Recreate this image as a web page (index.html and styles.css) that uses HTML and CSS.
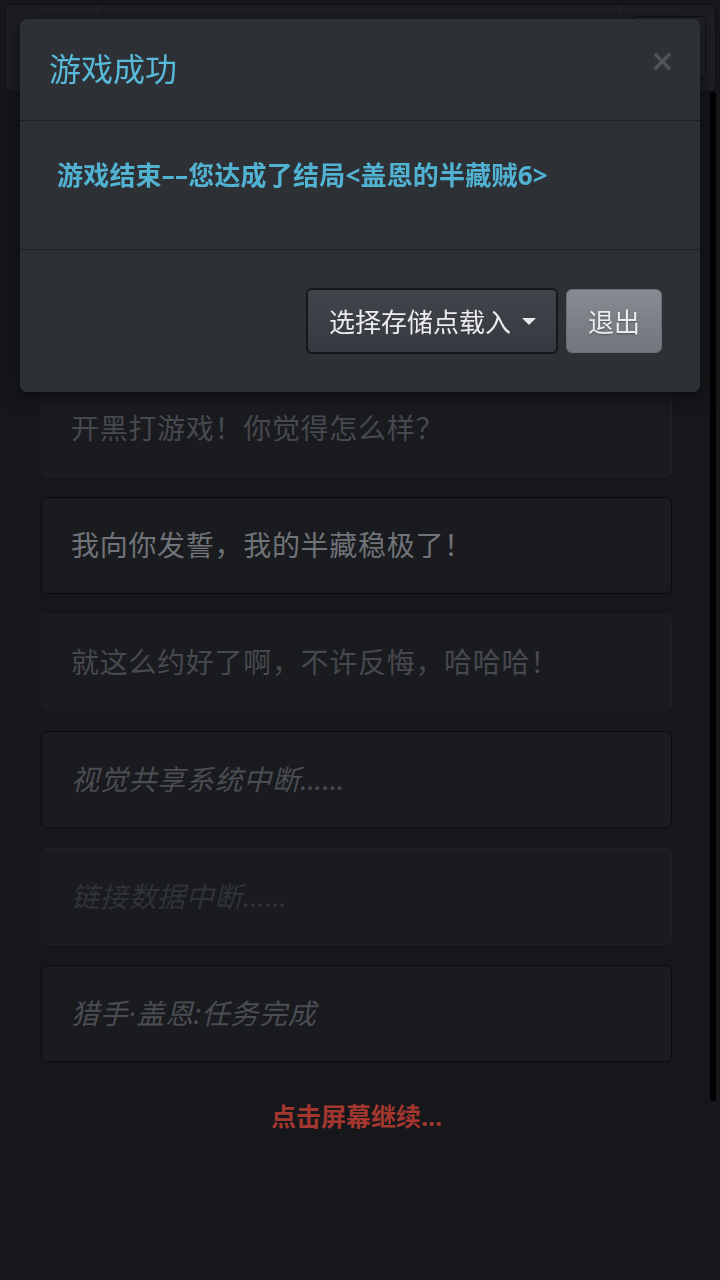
FILE: index.html
```html
<!DOCTYPE html>
<html lang="zh-CN">
<head>
    <meta charset="UTF-8">
    <meta name="viewport" content="width=device-width, initial-scale=1.0">
    <title>游戏成功</title>
    <link rel="stylesheet" href="styles.css">
</head>
<body>
    <div class="navbar">
        <div class="nav-brand"></div>
        <div class="nav-mid"></div>
        <div class="nav-side">
            <div class="nav-btn"></div>
        </div>
    </div>

    <div class="main">
        <div class="story">
            <div class="line">喂，是我，盖恩。</div>
            <div class="line">今晚有空吗？</div>
            <div class="line dim">开黑打游戏！你觉得怎么样？</div>
            <div class="line strong">我向你发誓，我的半藏稳极了！</div>
            <div class="line dim">就这么约好了啊，不许反悔，哈哈哈！</div>
            <div class="line strong italic">视觉共享系统中断……</div>
            <div class="line faint italic">链接数据中断……</div>
            <div class="line strong italic">猎手·盖恩:任务完成</div>

            <p class="continue">点击屏幕继续...</p>
        </div>
        <div class="scrollbar"></div>
    </div>

    <!-- end-of-game dialog -->
    <div class="modal">
        <div class="modal-header">
            <h4 class="modal-title">游戏成功</h4>
            <span class="close">&times;</span>
        </div>
        <div class="modal-body">
            <p>游戏结束––您达成了结局&lt;盖恩的半藏贼6&gt;</p>
        </div>
        <div class="modal-footer">
            <button class="btn btn-load">选择存储点载入<span class="caret"></span></button>
            <button class="btn btn-exit">退出</button>
        </div>
    </div>
</body>
</html>
```

FILE: styles.css
```css
* {
    margin: 0;
    padding: 0;
    box-sizing: border-box;
}
body {
    background-color: #15171a;
    font-family: "Noto Sans", "Noto Sans CJK SC", sans-serif;
    color: #6b6e73;
}

/* page behind the dialog */
.navbar {
    display: flex;
    height: 88px;
    margin: 4px 4px 0 5px;
    background-color: #1c1e22;
    border: 1px solid #0f1012;
    border-radius: 6px;
}
.nav-brand {
    width: 92px;
    border-right: 1px solid #24272b;
}
.nav-mid {
    flex: 1;
    border-right: 1px solid #24272b;
}
.nav-side {
    width: 94px;
    padding: 11px 9px 0 11px;
}
.nav-btn {
    height: 62px;
    border: 1px solid #0e0f11;
    border-radius: 5px;
    background-color: #202226;
}

.main {
    display: flex;
}
.story {
    flex: 1;
    padding: 54px 38px 0 41px;
}
.scrollbar {
    width: 6px;
    height: 1009px;
    margin-right: 4px;
    background-color: #000;
    border-radius: 3px;
}
.line {
    height: 97px;
    margin-bottom: 20px;
    padding: 30px 29px 0;
    font-size: 28px;
    line-height: 34px;
    letter-spacing: 0.7px;
    background-color: #1a1b1f;
    border: 1px solid #1f2125;
    border-radius: 6px;
    color: #46494d;
}
.line.strong {
    border-color: #0b0c0e;
    color: #4a4d51;
}
.line.strong:not(.italic) {
    color: #707378;
}
.line.faint {
    color: #303337;
}
.line.italic {
    font-style: italic;
}
.continue {
    padding-top: 18px;
    text-align: center;
    font-size: 25px;
    line-height: 32px;
    font-weight: bold;
    color: #a3372f;
}

/* dialog */
.modal {
    position: fixed;
    top: 19px;
    left: 20px;
    width: 680px;
    background-color: #2d3136;
    border-radius: 7px;
    box-shadow: 0 4px 18px rgba(0, 0, 0, 0.55);
}
.modal-header {
    position: relative;
    padding: 30px 29px 31px;
    border-bottom: 1px solid #1e2125;
}
.modal-title {
    font-size: 32px;
    line-height: 40px;
    font-weight: normal;
    color: #58b9d8;
}
.close {
    position: absolute;
    top: 22px;
    right: 25px;
    font-size: 30px;
    line-height: 40px;
    font-family: "DejaVu Sans", sans-serif;
    font-weight: bold;
    color: #4f545a;
}
.modal-body {
    padding: 38px 37px;
    border-bottom: 1px solid #1e2125;
}
.modal-body p {
    margin-bottom: 20px;
    font-size: 26px;
    line-height: 32px;
    letter-spacing: 0.2px;
    font-weight: bold;
    color: #51b2d2;
}
.modal-footer {
    display: flex;
    justify-content: flex-end;
    align-items: center;
    gap: 8px;
    padding: 38px;
}
.btn {
    font-family: "Noto Sans CJK SC", "Noto Sans", sans-serif;
    font-size: 26px;
    line-height: 32px;
    border-radius: 6px;
    color: #ececec;
}
.btn-load {
    display: flex;
    align-items: center;
    height: 66px;
    padding: 0 20px 0 21px;
    background: linear-gradient(#41454b, #363a40);
    border: 2px solid #15171a;
}
.caret {
    margin-left: 11px;
    width: 0;
    height: 0;
    border-left: 7px solid transparent;
    border-right: 7px solid transparent;
    border-top: 7px solid #e8e8e8;
}
.btn-exit {
    height: 64px;
    padding: 0 21px;
    background: linear-gradient(#878c93, #71767c);
    border: 1px solid #6a6f75;
    text-shadow: 0 1px 2px rgba(0, 0, 0, 0.35);
}
```
